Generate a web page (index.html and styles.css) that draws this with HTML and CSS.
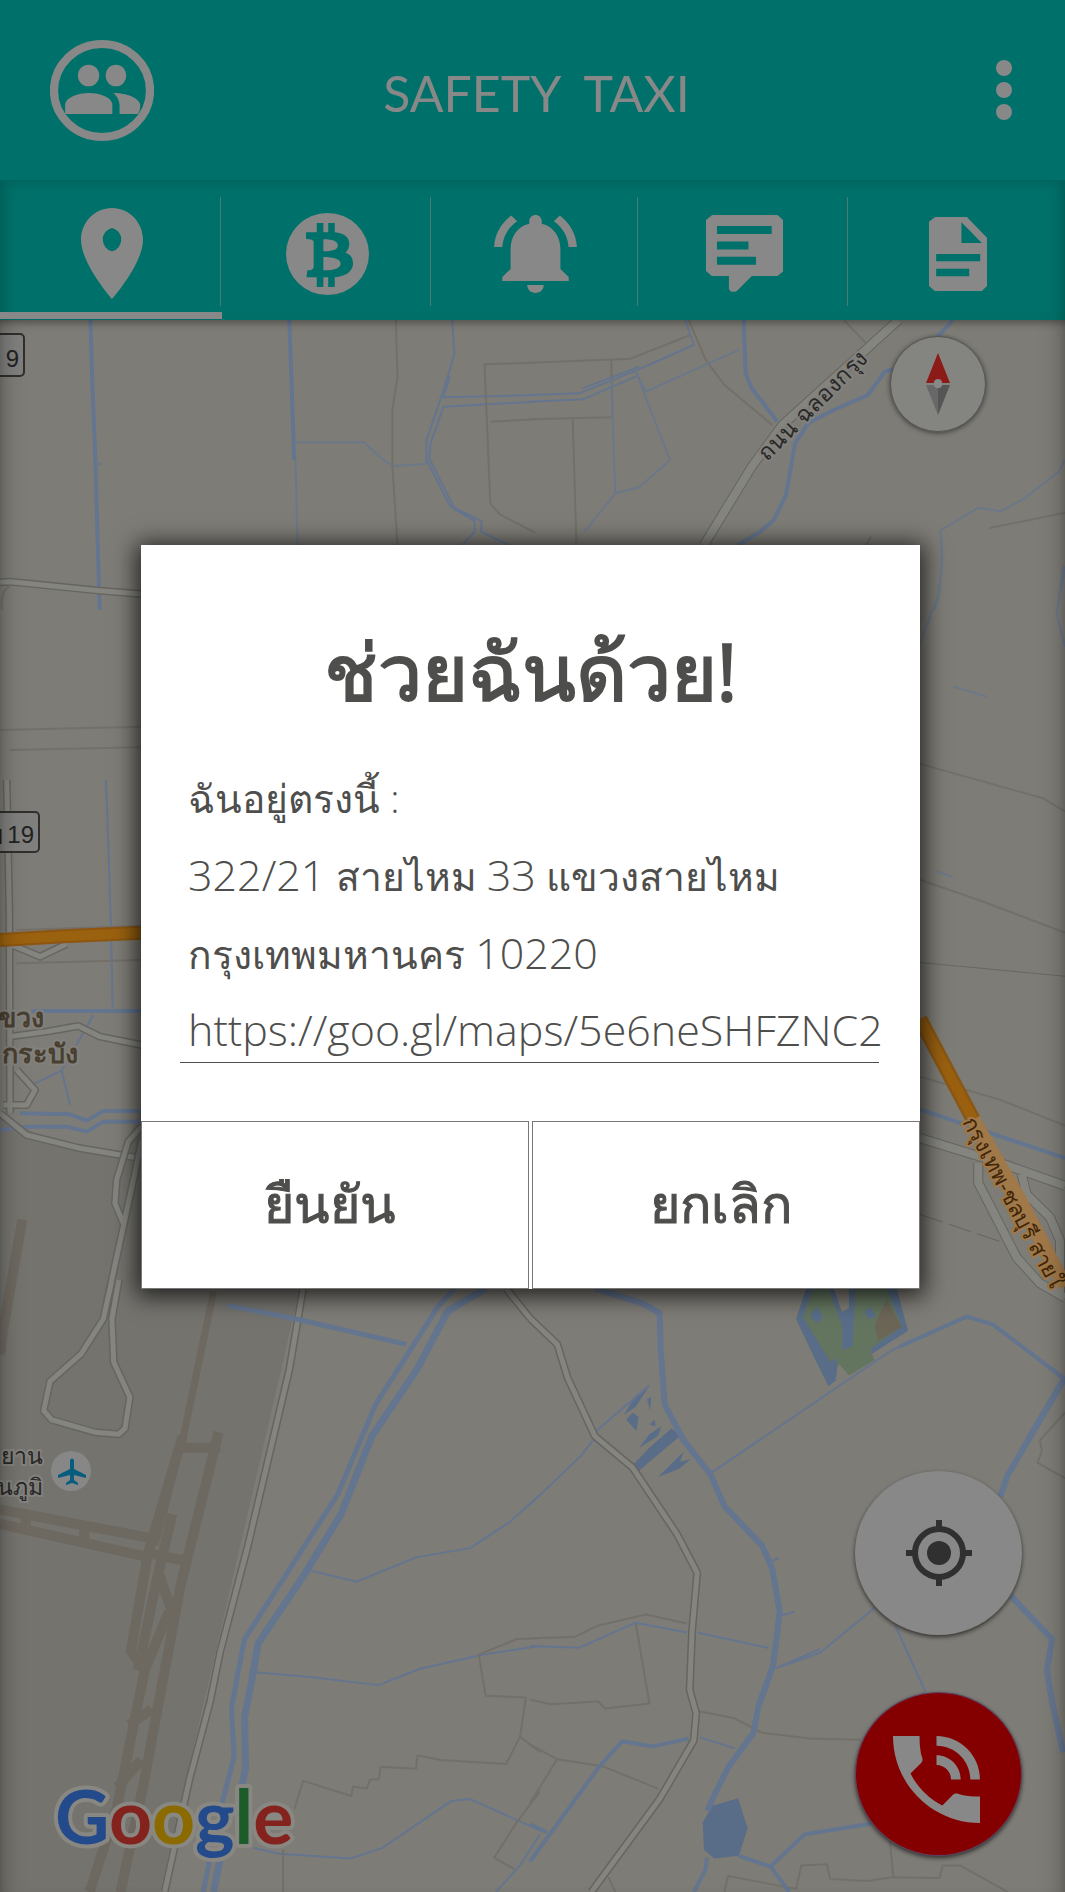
FILE: index.html
```html
<!DOCTYPE html>
<html lang="th">
<head>
<meta charset="utf-8">
<meta name="viewport" content="width=device-width, initial-scale=1">
<title>Safety Taxi</title>
<link rel="stylesheet" href="styles.css">
</head>
<body>
<header class="appbar">
  <button class="icon-button" type="button" aria-label="Contacts">
    <svg class="people" viewBox="145 117 302 303" preserveAspectRatio="none" aria-hidden="true">
      <ellipse cx="296" cy="268.500" rx="139.500" ry="139.500" fill="none" stroke="#888" stroke-width="24"/>
      <ellipse cx="257" cy="223.500" rx="31" ry="32.500"/><ellipse cx="336.500" cy="223.500" rx="30" ry="32.500"/>
      <path d="M189 339V309C194 288 225 276 258 276S322 288 326 309V339zM329 276C368 276 403 291 407 311Q408 326 401 339H347V311Q345 289 329 276z"/>
    </svg>
  </button>
  <h1 class="brand">SAFETY&nbsp; TAXI</h1>
  <button class="icon-button menu" type="button" aria-label="Menu">
    <svg class="dots" viewBox="0 0 18 60" aria-hidden="true"><circle cx="9" cy="8" r="8"/><circle cx="9" cy="30" r="8"/><circle cx="9" cy="52" r="8"/></svg>
  </button>
</header>

<nav class="tabs" aria-label="Sections">
  <a class="tab tab-active" href="#map" aria-label="Map">
    <svg class="pin" viewBox="5 2 14 20" preserveAspectRatio="none" aria-hidden="true"><path d="M12 2C8.130 2 5 5.130 5 9c0 5.250 7 13 7 13s7-7.750 7-13c0-3.870-3.130-7-7-7zm0 9.500a2.600 2.600 0 0 1 0-5.100 2.600 2.600 0 0 1 0 5.100z"/></svg>
  </a>
  <a class="tab" href="#fare" aria-label="Fare">
    <svg class="coin" viewBox="830 639 240 246" preserveAspectRatio="none" aria-hidden="true"><path fill-rule="evenodd" d="M830 762A120 123 0 1 1 1070 762A120 123 0 1 1 830 762zM919 669V697H888V717Q910 717 910 726V800Q910 811 892 811L889 832H919V861H938V832H952V861H971V832C1004 830 1024 813 1024 790Q1022 764 1002 758Q1013 748 1013 730C1012 711 998 700 971 697V669H952V697H938V669zM938 718C965 718 980 724 980 737C979 748 965 754 938 754zM938 771C970 771 988 778 988 791C988 804 970 811 938 811z"/></svg>
  </a>
  <a class="tab" href="#alerts" aria-label="Alerts">
    <svg class="bell" viewBox="2 2.500 20 19.500" preserveAspectRatio="none" aria-hidden="true"><path d="M7.580 4.080L6.150 2.650C3.750 4.480 2.170 7.300 2.030 10.500h2c.15-2.650 1.510-4.970 3.550-6.420zM19.970 10.500h2c-.15-3.200-1.730-6.020-4.120-7.850l-1.420 1.430c2.020 1.450 3.390 3.770 3.540 6.420zM18 11c0-3.070-1.640-5.640-4.500-6.320V4c0-.830-.67-1.500-1.500-1.500s-1.500.670-1.500 1.500v.68C7.630 5.360 6 7.920 6 11v5l-2 2v1h16v-1l-2-2v-5zM12 22c1.100 0 2-.900 2-2h-4c0 1.100.890 2 2 2z"/></svg>
  </a>
  <a class="tab" href="#messages" aria-label="Messages">
    <svg class="chat" viewBox="522 645 225 232" preserveAspectRatio="none" aria-hidden="true"><path fill-rule="evenodd" d="M540 645H731L747 660V815L731 829H656L613 873Q605 879 594 875L589 868V829H539L522 814V660zM554 678V702H714V678zM554 725V749H646V725zM554 771V795H668V771z"/></svg>
  </a>
  <a class="tab" href="#documents" aria-label="Documents">
    <svg class="doc" viewBox="1166 648 170 222" preserveAspectRatio="none" aria-hidden="true"><path fill-rule="evenodd" d="M1184 648H1277L1336 710V855L1321 870H1183L1166 855V662zM1261 664V726H1321zM1187 759V781H1316V759zM1187 803V826H1284V803z"/></svg>
  </a>
</nav>

<main class="map" id="map">
  <svg class="map-canvas" viewBox="0 320 1065 1572" preserveAspectRatio="xMidYMin slice" role="img" aria-label="Map">
    <rect y="320" width="1065" height="1572" fill="#7e7c76"/>
    <path fill="#74736e" d="M0 1112L45 1140L120 1155L141 1110L300 1288L160 1892H0z"/>

    <!-- north-west district -->
    <g class="lines" transform="translate(0 310) scale(.3412 .3333)">
      <path class="canal w3" d="M265 30L270 200L280 465L292 900M848 30L854 200L862 450"/>
      <path class="canal w1" d="M862 397H1066L1130 455L1155 468L1250 461M866 450L872 705M282 462H300"/>
      <path class="canal w2" d="M1325 30L1332 130L1318 180L1290 270L1250 390V450L1320 590L1390 632L1392 664L1355 705M1318 200L1300 262L1568 255M1568 275L1300 290L1262 400L1258 445L1330 592L1412 634L1410 665L1490 705"/>
      <path class="lane" d="M1160 30L1165 200L1150 300V470L1165 705M1568 158L1420 163L1437 580L1465 613L1568 668M1437 335L1568 328"/>
      <path class="case w9" d="M0 817L30 815L292 842L413 852"/>
      <path class="lane" d="M6 900Q0 840 30 828"/>
      <path class="road w6" d="M0 817L30 815L292 842L413 852"/>
    </g>

    <!-- north-east district -->
    <g class="lines" transform="translate(530 310) scale(.3412 .3333)">
      <path class="lane" d="M0 158L295 146L470 75M238 150L242 320M0 328L240 322M125 322L136 700M465 30L515 150L570 225L710 345M920 30L985 100M1345 655L1568 608M1000 680L985 705"/>
      <path class="canal w2" d="M0 255L145 250L310 182L480 105L455 30M0 275L155 268L310 200M155 235L320 170"/>
      <path class="canal w1" d="M310 185L340 245L615 118M310 185L410 450L320 532L250 550L160 665M238 210L250 550M1185 900L1200 850L1208 750L1202 662L1315 593L1380 604L1450 565L1550 485L1568 450M1568 770L1545 900"/>
      <path class="canal w3" d="M626 30L632 190L650 235L725 335M1240 30L1195 80L1120 160L1040 185L990 255L890 300L815 340L777 400L750 555L715 630L675 665L610 705"/>
      <path class="case w12" d="M1080 30L740 345L650 470L510 705"/>
      <path class="road w9" d="M1080 30L740 345L650 470L510 705"/>
    </g>

    <!-- western junction -->
    <g class="lines" transform="translate(0 780) scale(.3333)">
      <path class="canal w2" d="M317 0L322 100L333 440L338 685M105 910L185 872L280 705M185 872L210 975"/>
      <path class="canal w3" d="M95 693H425M60 1000L210 1003L260 1022L310 993H425M0 1050L80 1040H200L260 1055L310 1025H425"/>
      <path class="lane" d="M50 550L425 540M50 450L425 438M0 -150L425 -160M30 -90L425 -98"/>
      <path class="case w9" d="M20 0L28 400L30 1000M0 480L120 530L200 492M30 770L140 755L235 738L300 770L425 795M50 870L105 930L80 975L10 975M0 1000L80 1065L240 1105L420 1135"/>
      <path class="road w6" d="M20 0L28 400L30 1000M0 480L120 530L200 492M30 770L140 755L235 738L300 770L425 795M50 870L105 930L80 975L10 975M0 1000L80 1065L240 1105L420 1135"/>
      <path class="case w9" d="M425 1040L385 1085L350 1200L345 1270L370 1330M425 1080L405 1180L320 1570"/>
      <path class="road w6" d="M425 1040L385 1085L350 1200L345 1270L370 1330M425 1080L405 1180L320 1570"/>
      <path stroke="#8d5610" stroke-width="14" d="M0 480L190 469L425 458"/>
      <path stroke="#9a610f" stroke-width="10" d="M0 480L190 469L425 458"/>
    </g>

    <!-- eastern motorway -->
    <g class="lines" transform="translate(900 540) scale(.3333 .574)">
      <path class="canal w1" d="M125 0V45L115 95L60 180M490 45L470 130L495 185M160 255L260 273M110 577L160 588"/>
      <path class="lane" d="M60 390L430 450L495 473M60 592L240 628L495 684M60 935L300 975L495 1020"/>
      <path stroke="#666963" stroke-width="1" d="M60 736L495 760"/>
      <path stroke="#66645f" stroke-width="1" stroke-dasharray="24 6" d="M60 1175L310 1224"/>
      <path class="canal w3" d="M60 992L495 1077M0 1405L200 1353L280 1367L490 1460L380 1568"/>
      <path class="case w12" d="M60 1042L300 1085L495 1125M235 1085V1120L350 1250L420 1295L495 1320M365 1105L380 1140L450 1180L480 1220V1310"/>
      <path class="road w9" d="M60 1042L300 1085L495 1125M235 1085V1120L350 1250L420 1295L495 1320M365 1105L380 1140L450 1180L480 1220V1310"/>
      <path stroke="#8a5714" stroke-width="15" d="M60 835L220 1010"/>
      <path stroke="#9a6010" stroke-width="10" d="M60 835L220 1010"/>
      <path stroke="#a17848" stroke-width="14" d="M220 1010L360 1150L495 1300"/>
    </g>

    <!-- airport and the south-west -->
    <g class="lines" transform="translate(0 1280) scale(.3444 .3903)">
      <path class="runway w12" d="M65 -155L10 120L0 190M0 588L430 660M0 625L430 710M75 595V640M245 630V680M635 390L525 780L415 1300L350 1568M430 700L380 950L420 1000L340 1350L260 1568M530 400L430 700L540 720M500 600L460 750L500 850M460 750L400 1000M530 430H640M420 1000L490 850M375 1140L440 1100M340 1300L410 1230"/>
      <path class="runway w8" d="M620 30L535 390L450 680"/>
      <path class="case w9" d="M325 0L300 100L235 190L145 260L127 335L150 358L275 390L345 395L363 380L377 300L330 210L325 100L345 0M880 22L840 230L720 680L640 950L610 1080L550 1280L478 1568"/>
      <path class="road w6" d="M325 0L300 100L235 190L145 260L127 335L150 358L275 390L345 395L363 380L377 300L330 210L325 100L345 0M880 22L840 230L720 680L640 950L610 1080L550 1280L478 1568"/>
      <path class="canal w6" d="M660 65L860 100L1180 165M1320 22L1270 70L1090 320L980 550L710 920L690 1010L672 1100L680 1220L645 1340M590 1568L610 1480"/>
      <path class="canal w8" d="M1410 22L1300 80L1210 230L1080 400L990 600L880 760L750 930L730 1030L710 1120L713 1250L690 1350M620 1568L640 1480"/>
      <path class="canal w2" d="M900 744L1035 773L1210 710L1365 687L1480 620L1568 550M740 1005L900 1017L1100 1038L1220 996L1400 960L1568 938M735 1455L810 1470L1020 1482L1110 1455L1310 1335L1365 1330L1568 1410M1440 1568L1510 1500L1568 1420"/>
      <path class="lane" d="M855 1355L880 1283L1020 1322L1025 1298L1065 1303L1075 1280H1100L1105 1247L1208 1252L1212 1218L1280 1230L1470 1240L1510 1170L1527 1070L1410 1065L1390 960L1500 920L1568 918M1510 1170L1568 1210M1568 1310L1500 1390L1435 1480L1495 1510M822 1460V1568"/>
    </g>

    <!-- south-east district -->
    <g class="lines" transform="translate(530 1280) scale(.3412 .3903)">
      <g stroke="none" fill="#596d88">
        <path fill="#63755f" d="M810 22H1070L1100 125L1000 185L1010 205L935 245L905 215L880 265L840 210L780 100z"/>
        <path d="M810 22L780 100L845 220L875 272L900 255V200L880 210L800 95L830 22zM875 22L915 120V180L945 170L955 22H935V75L910 80L895 22zM1045 22L1090 120L1000 175V190L1108 130L1075 22zM820 90L840 70L860 95L840 112zM980 80L1000 70L1015 95L990 100z"/>
        <path fill="#6c6657" d="M1010 115L1045 50L1090 120L1020 155z"/>
        <path fill="#7e7c76" d="M890 22H935V72L915 82zM905 215L935 245L925 252L895 255z"/>
        <path d="M275 345L300 310L350 270L310 325zM282 358L300 340L318 350L312 387zM343 305L355 300L352 335zM350 370L365 358L368 375zM320 430L350 395L385 375L375 400zM295 480L350 430L415 380L440 400L315 492zM375 505L450 440L440 465L470 460L435 485z"/>
        <path d="M535 1347L610 1328L638 1405L612 1475L540 1482L510 1460L506 1390z"/>
      </g>
      <path class="lane" d="M0 918L130 915L200 885L340 857L460 880M310 880L350 1085L220 1098L200 1080L60 1087L0 1075M495 1105L600 1123L680 1160L820 1175L970 1178M0 1190L80 1228L210 1245L375 1303M80 1228L0 1340M230 1530L250 1568M570 1568L580 1527L780 1560L795 1500L870 1497L880 1535L990 1540L1060 1530L1200 1532L1210 1500L1260 1500L1400 1568M1055 1440L1065 1530M1568 340L1495 410L1500 440L1487 468L1568 508"/>
      <path class="canal w2" d="M0 938L145 942L310 878L460 903M490 903L700 943M530 495L1060 180L1285 93L1350 113L1568 250M720 995L850 955L1010 840M720 995L850 945M1070 885L1160 1057M190 390L350 270M0 575L150 450L185 410M500 1172L600 1200M710 720L730 712M735 860L775 850"/>
      <path class="canal w3" d="M0 1490L200 1250L270 1182L360 1195L465 1175M0 1395L50 1415M610 1475L705 1503L805 1420L1000 1393M705 1503L760 1568M518 1480L515 1510L480 1568"/>
      <path class="canal w5" d="M190 22L330 60L380 85L383 180L395 320L450 410L530 500L570 580L680 680L710 740L732 850L712 990L670 1090L655 1160L580 1250L540 1320L520 1360M1568 250L1400 500L1378 555M1410 810L1530 920L1515 1000L1530 1080L1562 1210"/>
      <path class="case w9" d="M0 98L80 165L110 250L190 400L300 480L430 650L490 750L475 900L468 1050L487 1110L480 1180L380 1330L180 1568M0 98L-70 22"/>
      <path class="road w6" d="M0 98L80 165L110 250L190 400L300 480L430 650L490 750L475 900L468 1050L487 1110L480 1180L380 1330L180 1568M0 98L-70 22"/>
    </g>

    <g class="shield">
      <rect x="-30" y="334" width="54" height="42" rx="4"/><text x="19" y="367" text-anchor="end">9</text>
      <rect x="-20" y="812" width="59" height="40" rx="4"/><text x="34" y="843" text-anchor="end">19</text>
      <path d="M0 829V844" stroke="#222" stroke-width="3"/>
    </g>
    <g class="place">
      <text x="767" y="462" transform="rotate(-45 767 462)">ถนน ฉลองกรุง</text>
      <text class="motorway" x="962" y="1122" transform="rotate(62 962 1122)">กรุงเทพ-ชลบุรี สายใ</text>
      <text class="district" x="44" y="1027" text-anchor="end">ขวง</text>
      <text class="district" x="78" y="1063" text-anchor="end">กระบัง</text>
      <text x="43" y="1464" text-anchor="end">ยาน</text>
      <text x="43" y="1495" text-anchor="end">นภูมิ</text>
    </g>
    <circle cx="71" cy="1471" r="20" fill="#878787"/>
    <path fill="#085c7e" d="M70 1460Q72 1457 74 1460V1469L86 1475V1478L74 1475V1480L78 1483V1485L72 1483L66 1485V1483L70 1480V1475L58 1478V1475L70 1469z"/>
    <text class="google" x="55" y="1844"><tspan fill="#234b8c">G</tspan><tspan fill="#84231d">o</tspan><tspan fill="#8b6a00">o</tspan><tspan fill="#234b8c">g</tspan><tspan fill="#1b5c2a">l</tspan><tspan fill="#84231d">e</tspan></text>
  </svg>

  <button class="compass" type="button" aria-label="Face north">
    <svg width="24" height="62" viewBox="0 0 24 62" aria-hidden="true"><path fill="#8c1a17" d="M12 0L24 30H16A4 4 0 0 0 8 30H0z"/><path fill="#686868" d="M0 32H8A4 4 0 0 0 12 35V62z"/><path fill="#555" d="M24 32H16A4 4 0 0 1 12 35V62z"/><circle cx="12" cy="31" r="4" fill="#888"/></svg>
  </button>
  <div class="actions">
    <button class="fab" type="button" aria-label="My location">
      <svg width="66" height="66" viewBox="0 0 66 66" aria-hidden="true"><g fill="none" stroke="#303030" stroke-width="6"><circle cx="33" cy="33" r="24"/><path d="M33 0V10M33 56V66M0 33H10M56 33H66"/></g><circle cx="33" cy="33" r="12" fill="#303030"/></svg>
    </button>
    <button class="fab fab-call" type="button" aria-label="Emergency call">
      <svg width="87" height="87" viewBox="3 3 18 18" aria-hidden="true"><path d="M20 15.500c-1.250 0-2.450-.2-3.570-.570-.350-.110-.740-.030-1.020.240l-2.200 2.200c-2.830-1.440-5.150-3.750-6.590-6.590l2.200-2.210c.28-.26.360-.65.250-1C8.700 6.450 8.500 5.250 8.500 3H3c0 9.940 8.060 18 18 18v-5.500zM19 12h2c0-4.970-4.030-9-9-9v2c3.870 0 7 3.130 7 7zm-4 0h2c0-2.760-2.240-5-5-5v2c1.660 0 3 1.340 3 3z"/></svg>
    </button>
  </div>
</main>

<div class="overlay">
  <form class="dialog" role="dialog" aria-labelledby="dialog-title">
    <h2 class="dialog-title" id="dialog-title">ช่วยฉันด้วย!</h2>
    <div class="message">
      <label for="link">ฉันอยู่ตรงนี้ :</label>
      <address><span class="number">322/21</span> สายไหม <span class="number">33</span> แขวงสายไหม<br>กรุงเทพมหานคร <span class="number">10220</span></address>
      <input id="link" type="text" value="https://goo.gl/maps/5e6neSHFZNC2">
    </div>
    <div class="choices">
      <button type="submit">ยืนยัน</button>
      <button type="button">ยกเลิก</button>
    </div>
  </form>
</div>
</body>
</html>
```
FILE: styles.css
```css
* { box-sizing: border-box; }

body {
  position: relative;
  display: flex;
  flex-direction: column;
  min-height: 100vh;
  margin: 0;
  background: #7e7c76;
  color: #4e4e4c;
  font-family: "Open Sans", "Noto Sans", sans-serif;
}

button {
  padding: 0;
  border: 0;
  background: none;
  color: inherit;
  font: inherit;
}

svg { display: block; }

.appbar {
  display: grid;
  grid-template-columns: 1fr auto 1fr;
  align-items: center;
  height: 180px;
  padding: 0 52px 0 50px;
  background: #00716a;
  color: #888;
  fill: #888;
}
.icon-button { justify-self: start; }
.menu { justify-self: end; }
.people { width: 104px; height: 101px; }
.dots { width: 18px; height: 60px; }
.brand {
  margin: 0;
  padding: 6px 0 0 10px;
  font: 400 50px/64px Lato, sans-serif;
}

.tabs {
  display: grid;
  grid-template-columns: 220fr 210fr 207fr 210fr 218fr;
  height: 140px;
  background: #00716a;
  box-shadow: inset 0 8px 12px -6px #00625c, inset 14px 0 18px -14px #00524d, inset -14px 0 18px -14px #00524d;
  fill: #888;
}
.tab {
  position: relative;
  display: flex;
  align-items: center;
  justify-content: center;
  padding: 7px 0 0 4px;
}
.tab + .tab::before {
  content: "";
  position: absolute;
  left: 0;
  top: 17px;
  bottom: 14px;
  width: 1px;
  background: #4a7b76;
}
.tab-active::after {
  content: "";
  position: absolute;
  left: 0;
  right: -2px;
  bottom: 1px;
  height: 7px;
  background: #888;
}
.pin { width: 62px; height: 91px; }
.coin { width: 83px; height: 82px; }
.bell { width: 83px; height: 78px; }
.chat { width: 77px; height: 77px; }
.doc { width: 58px; height: 74px; }

.map {
  position: relative;
  flex: 1;
  min-height: 1200px;
  overflow: hidden;
}
.map::after {
  content: "";
  position: absolute;
  inset: 0;
  pointer-events: none;
  box-shadow: inset 0 7px 10px -5px rgba(0, 0, 0, .4), inset 22px 0 24px -22px rgba(0, 0, 0, .35), inset -22px 0 24px -22px rgba(0, 0, 0, .35);
}
.map-canvas {
  position: absolute;
  inset: 0;
  width: 100%;
  height: 100%;
}
.lines { fill: none; stroke-linejoin: round; }
.lines path { vector-effect: non-scaling-stroke; }
.canal { stroke: #64758f; }
.lane { stroke: #73706a; stroke-width: 2px; }
.case { stroke: #666560; }
.road { stroke: #858580; }
.runway { stroke: #6d6860; }
.w1 { stroke-width: 2px; stroke: #6a7889; }
.w2 { stroke-width: 2px; }
.w3 { stroke-width: 4px; }
.w5 { stroke-width: 6px; }
.w6 { stroke-width: 5px; }
.w8 { stroke-width: 7px; }
.w9 { stroke-width: 8px; }
.w12 { stroke-width: 10px; }
.shield rect { fill: #7f7f7d; stroke: #302f2d; stroke-width: 2px; }
.shield text { font: 24px "Liberation Sans", sans-serif; fill: #222; }
.place text {
  fill: #282827;
  font-weight: 500;
  paint-order: stroke;
  stroke: #82817d;
  stroke-width: 4px;
}
.place { font-size: 23px; }
.place .district { font-size: 27px; font-weight: 600; fill: #493f30; }
.place .motorway { font-size: 22px; fill: #3f2608; stroke: #a17848; }
.google {
  font: 700 75px Lato, sans-serif;
  paint-order: stroke;
  stroke: #888782;
  stroke-width: 8px;
  stroke-linejoin: round;
}

.compass {
  position: absolute;
  top: 16px;
  right: 79px;
  display: grid;
  place-items: center;
  width: 96px;
  height: 96px;
  border: 1px solid #555;
  border-radius: 50%;
  background: #848481;
  box-shadow: 0 1px 5px rgba(0, 0, 0, .5);
}
.actions {
  position: absolute;
  right: 43px;
  bottom: 36px;
  display: grid;
  gap: 57px;
}
.fab {
  display: grid;
  place-items: center;
  width: 167px;
  height: 164px;
  border-radius: 50%;
  background: #888;
  box-shadow: 0 2px 4px rgba(0, 0, 0, .6);
}
.fab-call {
  padding: 10px 4px 0 0;
  border: 1px solid #5d4464;
  background: #840000;
  fill: #888;
}

.overlay {
  position: absolute;
  inset: 0;
  display: grid;
  place-items: center;
  padding: 0 145px 59px 141px;
}
.dialog {
  width: 100%;
  max-width: 779px;
  background: #fff;
  box-shadow: 0 3px 22px 4px rgba(0, 0, 0, .75);
}
.dialog-title {
  margin: 0;
  padding-top: 70px;
  font-size: 79px;
  font-weight: 500;
  line-height: 112px;
  text-align: center;
  -webkit-text-stroke: 2px #4e4e4c;
}
.message {
  margin: 0 25px 58px 39px;
  padding-top: 32px;
  font-size: 39px;
  font-weight: 300;
  line-height: 78px;
}
.message label,
.message address {
  display: block;
  height: 78px;
  padding-left: 8px;
  font-style: normal;
}
.message address { height: 156px; }
.message .number {
  font-size: 43px;
  line-height: 1px;
}
.message input {
  display: block;
  width: 100%;
  height: 70px;
  padding: 4px 0 0 8px;
  border: 0;
  background: linear-gradient(#4e4e4c, #4e4e4c) left bottom / calc(100% - 16px) 1px no-repeat;
  color: inherit;
  font: inherit;
  font-size: 43px;
  outline: 0;
}
.choices {
  display: grid;
  grid-template-columns: 1fr 1fr;
  gap: 3px;
}
.choices button {
  height: 168px;
  padding-right: 10px;
  border: 1px solid #777;
  font-size: 52px;
  font-weight: 500;
  -webkit-text-stroke: 1px #4e4e4c;
}
```
